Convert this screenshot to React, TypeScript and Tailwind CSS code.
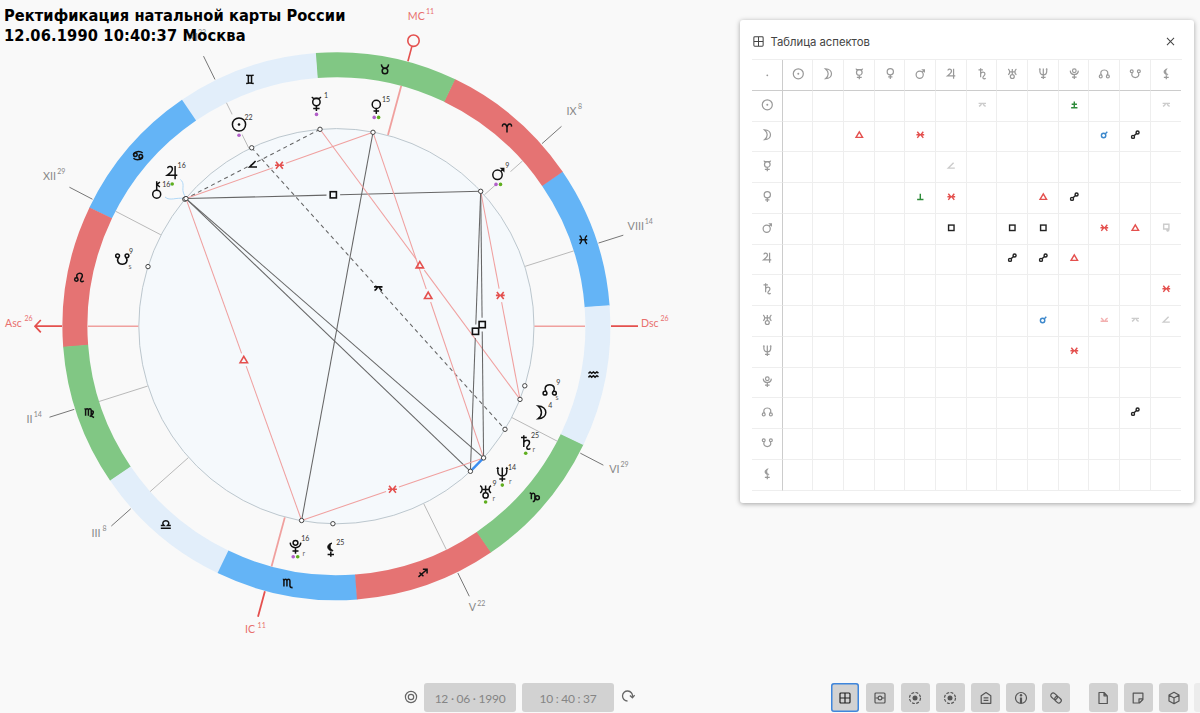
import React from "react";

type P = { x: number; y: number };
const CX = 336.4;
const CY = 326.2;
const polar = (r: number, deg: number): P => ({
  x: CX + r * Math.cos((deg * Math.PI) / 180),
  y: CY - r * Math.sin((deg * Math.PI) / 180),
});

const CROSS = "M0 2V7.2M-3.2 4.8H3.2";

const glyphs: Record<string, React.ReactNode> = {
  dot: <circle r="1.2" fill="currentColor" stroke="none" cy="2" />,
  sun: (
    <>
      <circle r="6.6" />
      <circle r="1.3" fill="currentColor" stroke="none" />
    </>
  ),
  moon: <path d="M-3.6-6.4C6.8-6.4 6.8 6.4-3.6 6.4C1 3 1-3-3.6-6.4Z" />,
  mercury: (
    <>
      <circle cy="-1.8" r="3.7" />
      <path d={"M-4.4-6.9C-4.1-5.4-2.8-5.3-1.5-5.4H1.5C2.8-5.3 4.1-5.4 4.4-6.9" + CROSS} />
    </>
  ),
  venus: (
    <>
      <circle cy="-2.6" r="4.1" />
      <path d="M0 1.6V7M-2.8 4H2.8" />
    </>
  ),
  mars: (
    <>
      <circle cx="-.8" cy="1.2" r="4.7" />
      <path d="M2.6-2.2L4.8-4.4M3.2-5.1L5.4-5.1L5.4-2.9Z" />
    </>
  ),
  jupiter: <path d="M-4.4-4.4C-4.2-7 .4-6.8 .3-3.6C.2-.8-2.6 1-4.8 2.6H5.2M3-6.6V6.6" />,
  saturn: <path d="M-2.2-7.4V4.4M-5-5.2H.8M-2.2-.2C-1-3 3.6-3 3.5 .2C3.4 3 .2 3.4 .8 5.4C1.2 7.2 3.5 7 4.3 5.8" />,
  uranus: (
    <>
      <path d="M-5.4-6.2C-2.8-4.4-2.8-.6-5.4 1.2M5.4-6.2C2.8-4.4 2.8-.6 5.4 1.2M-3.4-2.4H3.4M0-6.4V.8" />
      <circle cy="3.6" r="2.6" />
    </>
  ),
  neptune: <path d="M-4.5-6.3V-3.2C-4.5 3.2 4.5 3.2 4.5-3.2V-6.3M0-7V7M-3 4.6H3M-5.4-5.4L-4.5-6.5L-3.6-5.4M5.4-5.4L4.5-6.5L3.6-5.4" />,
  pluto: (
    <>
      <circle cy="-4" r="2.4" />
      <path d="M-5.3-4.2C-5 2.6 5 2.6 5.3-4.2M0 1V7M-3 4.3H3" />
    </>
  ),
  north: (
    <>
      <path d="M-3.7 1.7C-5.7-1-4.5-5 0-5S5.7-1 3.7 1.7" />
      <circle cx="-4.7" cy="3.4" r="1.9" />
      <circle cx="4.7" cy="3.4" r="1.9" />
    </>
  ),
  south: (
    <>
      <path d="M-3.7-1.7C-5.7 1-4.5 5 0 5S5.7 1 3.7-1.7" />
      <circle cx="-4.7" cy="-3.4" r="1.9" />
      <circle cx="4.7" cy="-3.4" r="1.9" />
    </>
  ),
  lilith: (
    <>
      <path d="M1.2-6.6C-4.6-5.6-4.4 .8 1.6 1.4C2.4 1.4 2.4 .9 1.6 .5C-1.4-1-1.2-4.8 1.2-6.6Z" fill="currentColor" strokeWidth="1" />
      <path d={CROSS} />
    </>
  ),
  chiron: (
    <>
      <circle cy="4" r="4" />
      <path d="M0 0V-9M3.2-8.2L.2-5.6L3.2-3.2" />
    </>
  ),
  aries: <path d="M-4.4-1.2C-5.2-4.8-.6-5 0-.4V4.6M0-.4C.6-5 5.2-4.8 4.4-1.2" />,
  taurus: (
    <>
      <circle cy="1.8" r="2.8" />
      <path d="M-3.6-4.8C-3.2-2-1.8-1 0-1S3.2-2 3.6-4.8" />
    </>
  ),
  gemini: <path d="M-3.8-4.2Q0-3.2 3.8-4.2M-3.8 4.2Q0 3.2 3.8 4.2M-1.6-3.6V3.6M1.6-3.6V3.6" />,
  cancer: (
    <>
      <path d="M-4.6-1C-4-4.4 2-5 4.6-2.6M4.6 1C4 4.4-2 5-4.6 2.6" />
      <circle cx="-2.7" cy="-.8" r="1.8" />
      <circle cx="2.7" cy=".8" r="1.8" />
    </>
  ),
  leo: (
    <>
      <circle cx="-3" cy="1.9" r="1.7" />
      <path d="M-2 .6C-5-5 3.4-6 3-1.8C2.8 0 .8 1.6 1.2 3.2C1.7 4.6 3.6 4.2 4.4 3.2" />
    </>
  ),
  virgo: <path d="M-5-4Q-3.9-4-3.9-2.6V3.2M-3.9-2.4Q-3.6-4-2.4-4T-1.1-2.4V3.2M-1.1-2.4Q-.8-4 .4-4T1.7-2.4V2.4Q1.9 4 4.6 4.8M1.7-1.2C4-3 5.6 .6 .2 4" />,
  libra: <path d="M-5 3.8H5M-5 .9H-1.9C-4.2-1.2-2.6-3.9 0-3.9S4.2-1.2 1.9 .9H5" />,
  scorpio: <path d="M-5-4Q-3.9-4-3.9-2.6V3.2M-3.9-2.4Q-3.6-4-2.3-4T-.9-2.4V3.2M-.9-2.4Q-.6-4 .7-4T2.1-2.4V2.6Q2.1 4.4 4.6 4.4M4 3.4V5.2" />,
  sagittarius: <path d="M-4.4 3.8L4-3.6M0-3.8H4.2V.3M-3.4-.6L.6 3.2" />,
  capricorn: (
    <>
      <path d="M-5-4L-3.4-3.2V2.4M-3.4-2C-2.6-4 0-4 .2-1.6V2.4C.1 4.2-.8 4.8-2 4.8M.3 .6L1.4 2.6" />
      <circle cx="2.6" cy="1" r="2" />
    </>
  ),
  aquarius: <path d="M-5-1.2L-3.4-2.8L-1.8-1.4L0-2.8L1.6-1.4L3.4-2.8L5-1.6M-5 2.6L-3.4 1L-1.8 2.4L0 1L1.6 2.4L3.4 1L5 2.2" />,
  pisces: <path d="M-3.6-4.2C-1-1.6-1 1.6-3.6 4.2M3.6-4.2C1-1.6 1 1.6 3.6 4.2M-4 0H4" />,
  square: <rect x="-3.1" y="-3.1" width="6.2" height="6.2" />,
  trine: <path d="M0-3.4L3.7 2.9H-3.7Z" />,
  sextile: <path d="M-4.4 0H4.4M-3.4-3.5L-.6 0L-3.4 3.5M3.4-3.5L.6 0L3.4 3.5" />,
  opposition: (
    <>
      <circle cx="-2.6" cy="2.4" r="1.7" />
      <circle cx="2.6" cy="-2.6" r="1.7" />
      <path d="M-1.4 1.2L1.4-1.4" />
    </>
  ),
  conjunction: (
    <>
      <circle cx="-.8" cy=".8" r="2.5" />
      <path d="M1-1L3.4-3.4" />
    </>
  ),
  quincunx: <path d="M-4.2-1.6H4.2M-3.8 1.9Q-1.6 1-.8-1.4M3.8 1.9Q1.6 1 .8-1.4" />,
  semisextile: <path d="M-4.2 1.6H4.2M-3.8-1.9Q-1.6-1-.8 1.4M3.8-1.9Q1.6-1 .8 1.4" />,
  semisquare: <path d="M2.6-3.4L-3.4 2.6H4" />,
  quintile: <path d="M0-3.6V3M-3.6 3H3.6" />,
  biquintile: <path d="M0-3.8V3.4M-3.6 3.4H3.6M-3-.6H3" />,
  sesqui: <path d="M-3-4H3V1.4H-3ZM1.6 1.4V4.6M0 3H3.4" />,
};

function G({ n, x, y, s = 1, w = 1.5, c = "#111" }: { n: string; x: number; y: number; s?: number; w?: number; c?: string }) {
  return (
    <g transform={`translate(${x} ${y}) scale(${s})`} fill="none" stroke="currentColor" strokeWidth={w} color={c}>
      {glyphs[n]}
    </g>
  );
}

const RED = "#e4504e";
const GREEN_DOT = "#5fae1e";
const PURPLE_DOT = "#b25fc9";

const signs: [string, string][] = [
  ["pisces", "#64b4f6"], ["aries", "#e57373"], ["taurus", "#81c784"], ["gemini", "#e2eefa"],
  ["cancer", "#64b4f6"], ["leo", "#e57373"], ["virgo", "#81c784"], ["libra", "#e2eefa"],
  ["scorpio", "#64b4f6"], ["sagittarius", "#e57373"], ["capricorn", "#81c784"], ["aquarius", "#e2eefa"],
];

const pts: Record<string, [number, number]> = {
  mercury: [320, 129.3], sun: [251.7, 147.8], venus: [373, 132.3], chiron: [184.8, 199.2], jupiter: [186, 198.6],
  mars: [480.7, 191.3], south: [148, 266.6], north: [524.8, 385.8], moon: [520, 399.4], saturn: [505, 429.3],
  neptune: [483.6, 457.9], uranus: [470.4, 471.3], pluto: [301.6, 520.5], lilith: [332.9, 523.7],
};

const aspects: { a: string; b: string; k: "red" | "black" | "dash"; m?: [string, number, number] }[] = [
  { a: "chiron", b: "mercury", k: "dash", m: ["semisquare", 253, 164.4] },
  { a: "sun", b: "saturn", k: "dash", m: ["quincunx", 378.3, 288.5] },
  { a: "jupiter", b: "venus", k: "red", m: ["sextile", 279.4, 165.3] },
  { a: "jupiter", b: "mars", k: "black", m: ["square", 333.3, 194.8] },
  { a: "venus", b: "pluto", k: "black" },
  { a: "venus", b: "neptune", k: "red", m: ["trine", 428.2, 295.6] },
  { a: "mercury", b: "moon", k: "red", m: ["trine", 419.8, 265] },
  { a: "mars", b: "moon", k: "red", m: ["sextile", 500.3, 295.4] },
  { a: "mars", b: "uranus", k: "black", m: ["square", 475.5, 331.3] },
  { a: "mars", b: "neptune", k: "black", m: ["square", 482.2, 324.6] },
  { a: "jupiter", b: "neptune", k: "black" },
  { a: "jupiter", b: "uranus", k: "black" },
  { a: "jupiter", b: "pluto", k: "red", m: ["trine", 243.8, 359.8] },
  { a: "pluto", b: "neptune", k: "red", m: ["sextile", 392.5, 489.3] },
];

const houses = [
  { n: "XII", d: "29", deg: 152.5, x: 43, y: 180, sx: 57.2, sy: 174 },
  { n: "XI", d: "22", deg: 116.2, x: 188, y: 41, sx: 198, sy: 34.5 },
  { n: "IX", d: "8", deg: 41.6, x: 566.5, y: 115, sx: 578, sy: 109.3 },
  { n: "VIII", d: "14", deg: 17.6, x: 627.6, y: 230, sx: 644.7, sy: 224 },
  { n: "II", d: "14", deg: 197.6, x: 26.4, y: 422.7, sx: 33.8, sy: 417 },
  { n: "III", d: "8", deg: 221.6, x: 91.5, y: 537, sx: 102.4, sy: 531.4 },
  { n: "V", d: "22", deg: 296.2, x: 468.7, y: 611.4, sx: 477.2, sy: 606 },
  { n: "VI", d: "29", deg: 332.5, x: 609.3, y: 473, sx: 620.5, sy: 467.3 },
];

const angles = [
  { n: "MC", d: "11", x: 407.8, y: 20, sx: 426, sy: 14 },
  { n: "Asc", d: "26", x: 5, y: 326.6, sx: 24.4, sy: 321 },
  { n: "Dsc", d: "26", x: 641, y: 326.6, sx: 660.4, sy: 321 },
  { n: "IC", d: "11", x: 245, y: 633, sx: 257.6, sy: 627.5 },
];

const bodies: { n: string; x: number; y: number; d: string; dx: number; dy: number; dots: [number, number, string][]; r?: [string, number, number] }[] = [
  { n: "sun", x: 239, y: 124.5, d: "22", dx: 244.5, dy: 119.6, dots: [[239, 135.2, PURPLE_DOT]] },
  { n: "mercury", x: 316.4, y: 103.8, d: "1", dx: 324, dy: 98.4, dots: [[316.5, 114.4, PURPLE_DOT]] },
  { n: "venus", x: 376.3, y: 107, d: "15", dx: 382, dy: 101.6, dots: [[374.2, 117.4, PURPLE_DOT], [378.6, 117.4, GREEN_DOT]] },
  { n: "mars", x: 498.3, y: 173.6, d: "9", dx: 505.2, dy: 168.4, dots: [[496, 184.4, PURPLE_DOT], [500.5, 184.4, GREEN_DOT]] },
  { n: "jupiter", x: 172.1, y: 172.6, d: "16", dx: 177.6, dy: 168, dots: [[172.2, 184, GREEN_DOT]] },
  { n: "chiron", x: 156.7, y: 190.2, d: "16", dx: 162.2, dy: 186.6, dots: [] },
  { n: "south", x: 122.3, y: 259.2, d: "9", dx: 129, dy: 254, dots: [], r: ["s", 128.5, 269] },
  { n: "north", x: 549.7, y: 389.8, d: "9", dx: 556.3, dy: 384.8, dots: [], r: ["s", 555.5, 399.8] },
  { n: "moon", x: 541.6, y: 412.4, d: "4", dx: 548.2, dy: 407.6, dots: [] },
  { n: "saturn", x: 526, y: 442.6, d: "25", dx: 531, dy: 437.8, dots: [[525.7, 453.3, GREEN_DOT]], r: ["r", 532.5, 452] },
  { n: "neptune", x: 502.3, y: 474.4, d: "14", dx: 508, dy: 469.8, dots: [[502.3, 485.1, GREEN_DOT]], r: ["r", 509, 484] },
  { n: "uranus", x: 485.6, y: 491.8, d: "9", dx: 492.4, dy: 485.6, dots: [[485.6, 502, GREEN_DOT]], r: ["r", 492.5, 501.2] },
  { n: "pluto", x: 295.5, y: 546.8, d: "16", dx: 301.2, dy: 541, dots: [[293.2, 556.8, PURPLE_DOT], [297.7, 556.8, GREEN_DOT]], r: ["r", 302.4, 556] },
  { n: "lilith", x: 330.8, y: 549.6, d: "25", dx: 336.3, dy: 544.8, dots: [] },
];

function Seg({ a, b, stroke, w = 1 }: { a: P; b: P; stroke: string; w?: number }) {
  return <line x1={a.x} y1={a.y} x2={b.x} y2={b.y} stroke={stroke} strokeWidth={w} />;
}

function AspectLine({ a, b, k, m }: (typeof aspects)[number]) {
  const [x1, y1] = pts[a];
  const [x2, y2] = pts[b];
  const stroke = k === "red" ? "#f0a09f" : "#666";
  const len = Math.hypot(x2 - x1, y2 - y1);
  if (!m || k === "dash")
    return <line x1={x1} y1={y1} x2={x2} y2={y2} stroke={stroke} strokeWidth="1.05" strokeDasharray={k === "dash" ? "4 3.4" : undefined} />;
  const t = ((m[1] - x1) * (x2 - x1) + (m[2] - y1) * (y2 - y1)) / (len * len);
  const g = 6.8 / len;
  const at = (q: number): P => ({ x: x1 + (x2 - x1) * q, y: y1 + (y2 - y1) * q });
  return (
    <>
      <Seg a={at(0)} b={at(t - g)} stroke={stroke} w={1.05} />
      <Seg a={at(t + g)} b={at(1)} stroke={stroke} w={1.05} />
    </>
  );
}

function Chart() {
  return (
    <svg className="block shrink-0 font-['Lato',sans-serif]" width="740" height="683" viewBox="0 0 740 683">
      {signs.map(([n, fill], i) => {
        const s = 4.3 + i * 30;
        const p1 = polar(274, s), p2 = polar(274, s + 30.1), p3 = polar(249, s + 30.1), p4 = polar(249, s);
        const c = polar(261.6, s + 15);
        return (
          <g key={n}>
            <path d={`M${p1.x} ${p1.y}A274 274 0 0 0 ${p2.x} ${p2.y}L${p3.x} ${p3.y}A249 249 0 0 1 ${p4.x} ${p4.y}Z`} fill={fill} />
            <G n={n} x={c.x} y={c.y} c="#111" w={1.5} />
          </g>
        );
      })}
      <circle cx={CX} cy={CY} r="197.6" fill="#f5f9fc" stroke="#bcc7ce" strokeWidth="1" />
      {houses.map((h) => (
        <g key={h.n}>
          <Seg a={polar(275, h.deg)} b={polar(301, h.deg)} stroke="#777" />
          <Seg a={polar(249, h.deg)} b={polar(198, h.deg)} stroke="#b9b9b9" />
          <text x={h.x} y={h.y} fontSize="10.8" fill="#888">{h.n}</text>
          <text x={h.sx} y={h.sy} fontSize="7" fill="#888">{h.d}</text>
        </g>
      ))}
      <path d="M232 114.5L241 135M495.5 183L510 171" stroke="#f9f9f9" strokeWidth="4" />
      {[74.9, 254.9].map((d) => (
        <Seg key={d} a={polar(249, d)} b={polar(198, d)} stroke="#f0a09e" w={1.8} />
      ))}
      {[0, 180].map((d) => (
        <Seg key={d} a={polar(248.6, d)} b={polar(198, d)} stroke="#f0a09e" w={1.6} />
      ))}
      <Seg a={polar(274.5, 74.9)} b={polar(289.8, 74.9)} stroke={RED} w={1.6} />
      <circle cx="413.5" cy="40.7" r="5.7" fill="none" stroke={RED} strokeWidth="1.6" />
      <Seg a={polar(274.5, 254.9)} b={polar(301, 254.9)} stroke={RED} w={1.8} />
      <path d="M611 326.2H638M62 326.2H35.5M40.8 320L35 326.2L40.8 332.4" fill="none" stroke={RED} strokeWidth="1.7" />
      {angles.map((h) => (
        <g key={h.n} fill="#e8706d">
          <text x={h.x} y={h.y} fontSize="10.6">{h.n}</text>
          <text x={h.sx} y={h.sy} fontSize="7">{h.d}</text>
        </g>
      ))}
      {aspects.map((q) => (
        <AspectLine key={q.a + q.b} {...q} />
      ))}
      <line x1="483.6" y1="457.9" x2="470.4" y2="471.3" stroke="#3c8df0" strokeWidth="2.4" />
      <path d="M180.3 179.5C185 183 182 188 183.2 192C184 195 185 196 186 198M165 197C170 201.5 176 197 185 198.5" fill="none" stroke="#a8d4f5" strokeWidth="0.9" />
      {aspects.map((q) => q.m && <G key={"m" + q.a + q.b} n={q.m[0]} x={q.m[1]} y={q.m[2]} c={q.k === "red" ? RED : "#111"} w={1.6} />)}
      {Object.entries(pts).map(([k, [x, y]]) => (
        <circle key={k} cx={x} cy={y} r="2.2" fill="#fff" stroke="#444" strokeWidth="1" />
      ))}
      {bodies.map((b) => (
        <g key={b.n}>
          <G n={b.n} x={b.x} y={b.y} />
          <text x={b.dx} y={b.dy} fontSize="7" fill="#333">{b.d}</text>
          {b.dots.map(([x, y, c]) => (
            <circle key={x} cx={x} cy={y} r="1.8" fill={c} />
          ))}
          {b.r && <text x={b.r[1]} y={b.r[2]} fontSize="7" fill="#666">{b.r[0]}</text>}
        </g>
      ))}
    </svg>
  );
}

const order = ["sun", "moon", "mercury", "venus", "mars", "jupiter", "saturn", "uranus", "neptune", "pluto", "north", "south", "lilith"];
const K = "#222", GR = "#2e8b3a", BL = "#3d88cc", FA = "#cccccc";
const cells: Record<string, [string, string]> = {
  "0-6": ["quincunx", FA], "0-9": ["biquintile", GR], "0-12": ["quincunx", FA],
  "1-2": ["trine", RED], "1-4": ["sextile", RED], "1-10": ["conjunction", BL], "1-11": ["opposition", K],
  "2-5": ["semisquare", FA],
  "3-4": ["quintile", GR], "3-5": ["sextile", RED], "3-8": ["trine", RED], "3-9": ["opposition", K],
  "4-5": ["square", K], "4-7": ["square", K], "4-8": ["square", K], "4-10": ["sextile", RED], "4-11": ["trine", RED], "4-12": ["sesqui", FA],
  "5-7": ["opposition", K], "5-8": ["opposition", K], "5-9": ["trine", RED],
  "6-12": ["sextile", RED],
  "7-8": ["conjunction", BL], "7-10": ["semisextile", "#f3b0b0"], "7-11": ["quincunx", FA], "7-12": ["semisquare", FA],
  "8-9": ["sextile", RED],
  "10-11": ["opposition", K],
};

function Mark({ n, c, s, w }: { n: string; c: string; s: number; w: number }) {
  return (
    <svg width="16" height="16" viewBox="-8 -8 16 16" className="block">
      <G n={n} x={0.3} y={-0.2} s={s} w={w} c={c} />
    </svg>
  );
}

function AspectTable() {
  return (
    <div className="grid w-[429.5px] grid-cols-[repeat(14,30.68px)] grid-rows-[repeat(14,30.77px)] border-t border-[#eeeeee]">
      {Array.from({ length: 196 }, (_, i) => {
        const r = Math.floor(i / 14) - 1;
        const c = (i % 14) - 1;
        const head = r < 0 || c < 0;
        const cell = cells[`${r}-${c}`];
        return (
          <div
            key={i}
            className={`flex items-center justify-center border-b pb-[2px] ${c === 12 ? "" : "border-r"} ${c < 0 ? "border-r-[#cccccc]" : "border-r-[#eeeeee]"} ${r < 0 ? "border-b-[#cccccc]" : "border-b-[#eeeeee]"}`}
          >
            {head ? (
              <Mark n={r < 0 && c < 0 ? "dot" : r < 0 ? order[c] : order[r]} c="#999999" s={0.76} w={1.6} />
            ) : (
              cell && <Mark n={cell[0]} c={cell[1]} s={0.88} w={1.6} />
            )}
          </div>
        );
      })}
    </div>
  );
}

function Ico({ children, size = 14, w = 1.2 }: { children: React.ReactNode; size?: number; w?: number }) {
  return (
    <svg width={size} height={size} viewBox="0 0 14 14" fill="none" stroke="currentColor" strokeWidth={w} strokeLinejoin="round">
      {children}
    </svg>
  );
}

const tableIcon = <path d="M2 3Q2 2 3 2H11Q12 2 12 3V11Q12 12 11 12H3Q2 12 2 11ZM2 7H12M7 2V12" />;

const orbit = (
  <>
    <circle cx="7" cy="7" r="5.5" strokeDasharray="2.9 1.4" />
    <circle cx="7" cy="7" r="2.5" fill="currentColor" stroke="none" />
  </>
);

const tools: React.ReactNode[] = [
  tableIcon,
  <>
    <rect x="2" y="2" width="10" height="10" rx="1" />
    <circle cx="7" cy="7" r="1.9" />
    <path d="M2.5 7H5M9 7H11.5" />
  </>,
  orbit,
  orbit,
  <path d="M2.2 12.3V4.7L7 1.5L11.8 4.7V12.3ZM4.6 6.8H9.4M4.6 9.3H9.4" />,
  <>
    <circle cx="7" cy="7" r="5.5" />
    <path d="M7 6.5V12" strokeWidth="2.2" />
    <circle cx="7" cy="4.3" r="1.2" fill="currentColor" stroke="none" />
  </>,
  <g transform="rotate(42 7 7)">
    <rect x="0.8" y="4.6" width="7.2" height="4.8" rx="2.4" />
    <rect x="6" y="4.6" width="7.2" height="4.8" rx="2.4" />
  </g>,
  <path d="M3 1.5H8L11.3 4.8V12.5H3ZM8 1.5V4.8H11.3" />,
  <path d="M2.2 2.2H11.9V8.5L8.4 12H2.2ZM11.9 7.8H8V12" />,
  <path d="M7 1.3L12 4.1V9.9L7 12.7L2 9.9V4.1ZM2.2 4.2L7 7L11.8 4.2M7 7V12.5" />,
];

function Tool({ i }: { i: number }) {
  return (
    <button
      className={`flex h-[29px] w-[28.7px] shrink-0 items-center justify-center rounded-[3px] bg-[#d2d2d2] ${i === 0 ? "text-[#222222] shadow-[inset_0_0_0_1.5px_#3f86dc]" : "text-[#555555]"}`}
    >
      <Ico>{tools[i]}</Ico>
    </button>
  );
}

export default function App() {
  return (
    <div className="relative flex h-[713px] w-[1200px] flex-col overflow-hidden bg-[#f9f9f9]">
      <h1 className="absolute left-[4px] top-[6px] whitespace-nowrap font-['DejaVu_Sans_Condensed','DejaVu_Sans',sans-serif] text-[16.3px] font-bold leading-[19.5px] tracking-[0.06px] text-black [font-stretch:condensed]">
        Ректификация натальной карты России
        <br />
        <span className="tracking-[0.14px]">12.06.1990 10:40:37 Москва</span>
      </h1>
      <div className="flex h-[683px] shrink-0">
        <Chart />
        <section className="mt-[20px] flex h-[482.5px] w-[453.5px] flex-col rounded-[3px] bg-white pl-[12px] shadow-[0_1px_5px_rgba(0,0,0,0.35)]">
          <header className="flex h-[39px] shrink-0 items-center pr-[16.5px] pt-[4px] text-[#444444]">
            <Ico size={13} w={1.1}>{tableIcon}</Ico>
            <h2 className="ml-[5.5px] flex-1 pt-[1px] font-['Inter',sans-serif] text-[11.3px]">Таблица аспектов</h2>
            <Ico size={13} w={1.1}>
              <path d="M3.2 3.2L10.8 10.8M10.8 3.2L3.2 10.8" />
            </Ico>
          </header>
          <AspectTable />
        </section>
      </div>
      <footer className="flex h-[30px] shrink-0 items-start font-['Lato',sans-serif] text-[12px] tracking-[-0.25px] text-[#858585]">
        <div className="ml-[404px] flex h-[28px] w-[20px] shrink-0 items-center text-[#666666]">
          <Ico size={14} w={1.2}>
            <circle cx="7" cy="7" r="5.6" />
            <circle cx="7" cy="7" r="2.7" />
          </Ico>
        </div>
        <div className="flex h-[29px] w-[92px] shrink-0 items-center justify-center rounded-[3px] bg-[#d2d2d2] pt-[2px]">12 · 06 · 1990</div>
        <div className="ml-[6px] flex h-[29px] w-[92px] shrink-0 items-center justify-center rounded-[3px] bg-[#d2d2d2] pt-[2px]">10 : 40 : 37</div>
        <div className="ml-[7px] flex h-[26px] w-[14px] shrink-0 items-center text-[#666666]">
          <Ico size={14} w={1.3}>
            <path d="M6.5 12A5 5 0 1 1 11.5 7.5M8.9 6.6L11.4 8.8L13.7 6.2" />
          </Ico>
        </div>
        <div className="ml-[195.5px] flex shrink-0 gap-[6.5px]">
          {[0, 1, 2, 3, 4, 5, 6].map((i) => (
            <Tool key={i} i={i} />
          ))}
        </div>
        <div className="ml-[18.5px] flex shrink-0 gap-[6.5px]">
          {[7, 8, 9].map((i) => (
            <Tool key={i} i={i} />
          ))}
          <div className="h-[29px] w-[10px] rounded-[3px] bg-[#ececec]" />
        </div>
      </footer>
    </div>
  );
}
